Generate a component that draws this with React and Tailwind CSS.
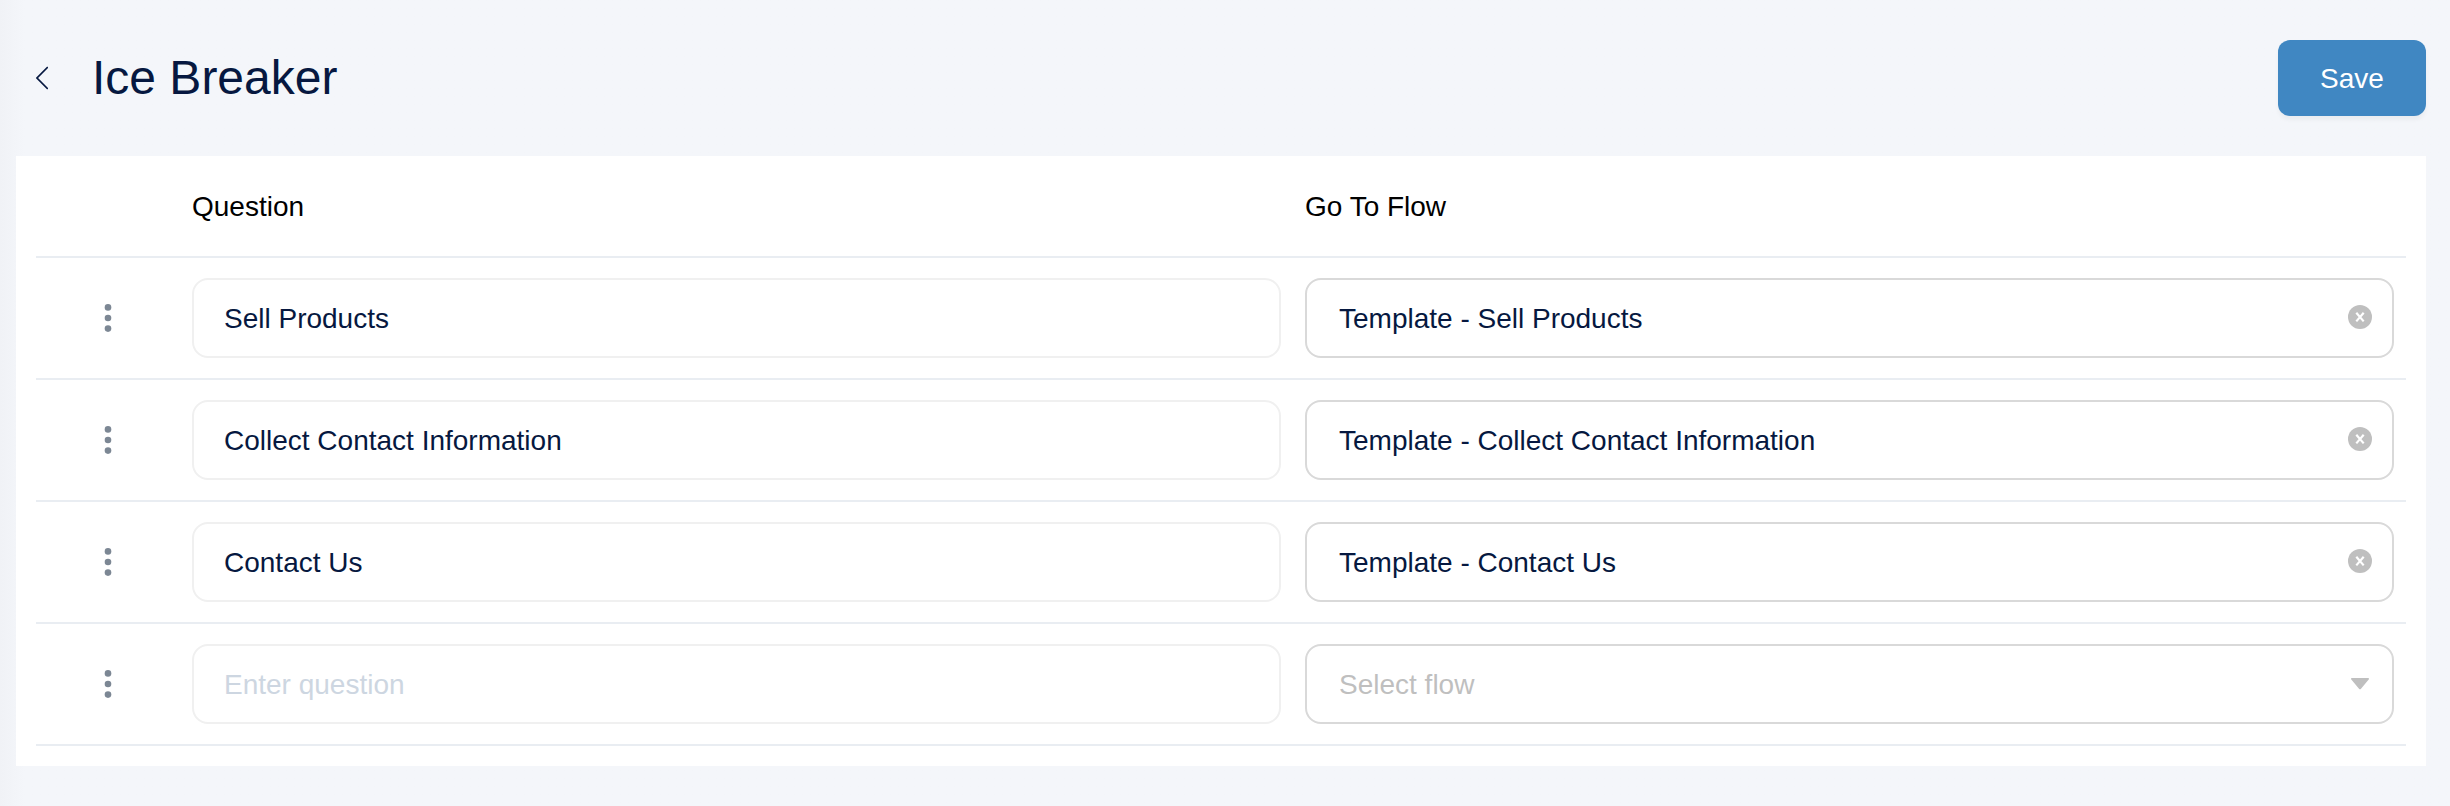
import React, { useState } from 'react'

const FLOWS = ['Template - Sell Products', 'Template - Collect Contact Information', 'Template - Contact Us']

const initialRows = [
  { id: 1, question: 'Sell Products', flow: FLOWS[0] },
  { id: 2, question: 'Collect Contact Information', flow: FLOWS[1] },
  { id: 3, question: 'Contact Us', flow: FLOWS[2] },
  { id: 4, question: '', flow: '' },
]

const BackIcon = () => (
  <svg width="12" height="24" viewBox="0 0 12 24" fill="none" stroke="currentColor" strokeWidth="1.7">
    <path d="M11.8 1L1 12l10.8 11" />
  </svg>
)

const DotsIcon = () => (
  <svg width="8" height="28" viewBox="0 0 8 28" fill="currentColor">
    <circle cx="4" cy="3.4" r="3.3" />
    <circle cx="4" cy="14" r="3.3" />
    <circle cx="4" cy="24.6" r="3.3" />
  </svg>
)

const ClearIcon = () => (
  <svg width="24" height="24" viewBox="0 0 24 24">
    <circle cx="12" cy="12" r="12" fill="#bfbfbf" />
    <path d="M8.3 7.8l7.4 8.6M15.7 7.8l-7.4 8.6" stroke="#fff" strokeWidth="2.2" />
  </svg>
)

const CaretIcon = () => (
  <svg width="18" height="12" viewBox="0 0 18 12" fill="#bfbfbf">
    <path d="M1 0h16c.9 0 1.3 1 .7 1.6L9.8 10.9c-.4.5-1.2.5-1.6 0L.3 1.6C-.3 1 .1 0 1 0z" />
  </svg>
)

const FlowSelect = ({ id, value, onChange }) => (
  <div className="relative">
    <select
      aria-label={`Flow ${id}`}
      value={value}
      onChange={(e) => onChange(e.target.value)}
      className={`block h-20 w-full appearance-none rounded-2xl border-2 border-[#d9d9d9] bg-white pt-0.5 pl-8 pr-16 outline-none ${value ? 'text-[#061840]' : 'text-[#bfbfbf]'}`}
    >
      <option value="" disabled>Select flow</option>
      {FLOWS.map((flow) => <option key={flow} value={flow}>{flow}</option>)}
    </select>
    {value ? (
      <button type="button" aria-label="Clear flow" onClick={() => onChange('')} className="absolute top-[27px] right-[22px]">
        <ClearIcon />
      </button>
    ) : (
      <span className="pointer-events-none absolute top-[34px] right-[25px]">
        <CaretIcon />
      </span>
    )}
  </div>
)

const App = () => {
  const [rows, setRows] = useState(initialRows)

  const update = (id, patch) => {
    setRows((prev) => prev.map((row) => (row.id === id ? { ...row, ...patch } : row)))
  }

  return (
    <div className="min-h-screen bg-linear-to-r from-[#f0f2f6] to-[#f4f6fa] to-[24px] pr-6 pb-10 pl-4 font-['Liberation_Sans',Arial,sans-serif] text-[28px] leading-9">
      <header className="flex h-[156px] items-center justify-between pl-5">
        <div className="flex items-center gap-11 text-[#061840]">
          <button type="button" aria-label="Back">
            <BackIcon />
          </button>
          <h1 className="text-5xl">Ice Breaker</h1>
        </div>
        <button type="button" className="h-[76px] w-[148px] rounded-xl bg-[#4087c2] pt-0.5 text-white shadow-[0_4px_4px_rgba(0,0,0,0.04)]">
          Save
        </button>
      </header>

      <main className="bg-white px-5 pb-5">
        <table className="w-full table-fixed border-separate border-spacing-0">
          <thead>
            <tr className="h-[102px]">
              <th className="w-36 border-b-2 border-[#e9edf2]" />
              <th className="border-b-2 border-[#e9edf2] px-3 pt-0.5 text-left font-normal text-black">Question</th>
              <th className="border-b-2 border-[#e9edf2] px-3 pt-0.5 text-left font-normal text-black">Go To Flow</th>
            </tr>
          </thead>
          <tbody>
            {rows.map((row) => (
              <tr key={row.id}>
                <td className="border-b-2 border-[#e9edf2]">
                  <button type="button" aria-label="Reorder" className="mx-auto block text-[#7c8794]">
                    <DotsIcon />
                  </button>
                </td>
                <td className="border-b-2 border-[#e9edf2] px-3 py-5">
                  <input
                    type="text"
                    aria-label={`Question ${row.id}`}
                    placeholder="Enter question"
                    value={row.question}
                    onChange={(e) => update(row.id, { question: e.target.value })}
                    className="block h-20 w-full rounded-2xl border-2 border-[#f0f0f0] bg-white px-[30px] pt-0.5 text-[#061840] outline-none placeholder:text-[#cdd6e1]"
                  />
                </td>
                <td className="border-b-2 border-[#e9edf2] px-3 py-5">
                  <FlowSelect id={row.id} value={row.flow} onChange={(flow) => update(row.id, { flow })} />
                </td>
              </tr>
            ))}
          </tbody>
        </table>
      </main>
    </div>
  )
}

export default App
